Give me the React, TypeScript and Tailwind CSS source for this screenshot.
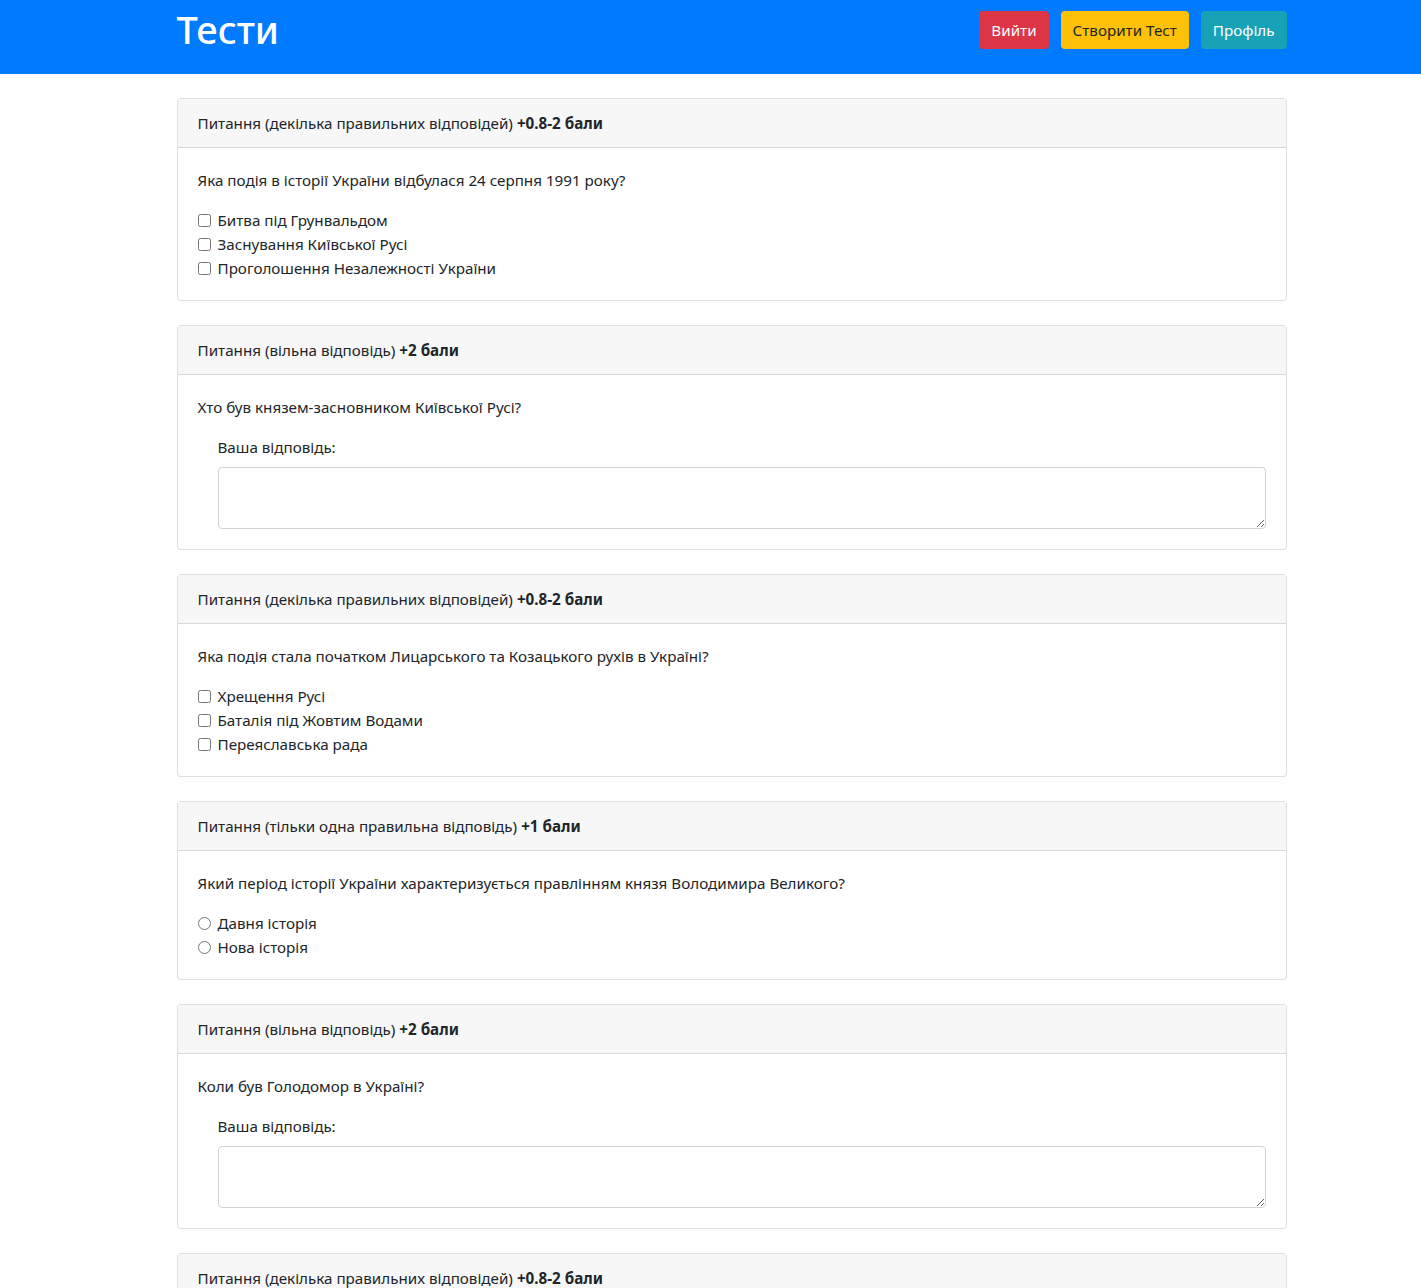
import React from "react";

type Q =
  | { kind: "multi"; header: string; points: string; text: string; options: string[] }
  | { kind: "single"; header: string; points: string; text: string; options: string[] }
  | { kind: "free"; header: string; points: string; text: string };

const questions: Q[] = [
  {
    kind: "multi",
    header: "Питання (декілька правильних відповідей)",
    points: "+0.8-2 бали",
    text: "Яка подія в історії України відбулася 24 серпня 1991 року?",
    options: ["Битва під Грунвальдом", "Заснування Київської Русі", "Проголошення Незалежності України"],
  },
  {
    kind: "free",
    header: "Питання (вільна відповідь)",
    points: "+2 бали",
    text: "Хто був князем-засновником Київської Русі?",
  },
  {
    kind: "multi",
    header: "Питання (декілька правильних відповідей)",
    points: "+0.8-2 бали",
    text: "Яка подія стала початком Лицарського та Козацького рухів в Україні?",
    options: ["Хрещення Русі", "Баталія під Жовтим Водами", "Переяславська рада"],
  },
  {
    kind: "single",
    header: "Питання (тільки одна правильна відповідь)",
    points: "+1 бали",
    text: "Який період історії України характеризується правлінням князя Володимира Великого?",
    options: ["Давня історія", "Нова історія"],
  },
  {
    kind: "free",
    header: "Питання (вільна відповідь)",
    points: "+2 бали",
    text: "Коли був Голодомор в Україні?",
  },
  {
    kind: "multi",
    header: "Питання (декілька правильних відповідей)",
    points: "+0.8-2 бали",
    text: "Яка подія в історії України відбулася 24 серпня 1991 року?",
    options: ["Битва під Грунвальдом", "Заснування Київської Русі", "Проголошення Незалежності України"],
  },
];

function Card({ q, idx }: { q: Q; idx: number }) {
  return (
    <div className="mb-6 rounded-[4px] border border-[rgba(0,0,0,0.125)] bg-white">
      <div className="border-b border-[rgba(0,0,0,0.125)] bg-[#f7f7f7] px-5 py-3 leading-6">
        {q.header} <b className="font-bold">{q.points}</b>
      </div>
      <div className="p-5">
        <p className="mb-4 leading-6">{q.text}</p>
        {q.kind === "free" ? (
          <div className="ml-5">
            <label className="mb-2 block leading-6">Ваша відповідь:</label>
            <textarea
              rows={2}
              className="block h-[62px] w-full resize-y rounded-[4px] border border-[#ced4da] bg-white px-3 py-1.5 leading-6 outline-none"
            />
          </div>
        ) : (
          <div>
            {q.options.map((o, i) => (
              <label key={i} className="flex h-6 items-center leading-6">
                <input
                  type={q.kind === "multi" ? "checkbox" : "radio"}
                  name={`q${idx}`}
                  className="m-0 mr-[7px] h-[13px] w-[13px]"
                />
                <span>{o}</span>
              </label>
            ))}
          </div>
        )}
      </div>
    </div>
  );
}

export default function App() {
  return (
    <div
      className="min-h-screen bg-white text-[15.2px] text-[#212529]"
      style={{ fontFamily: '"Noto Sans", "Open Sans", sans-serif' }}
    >
      <nav className="h-[74px] bg-[#007bff]">
        <div className="mx-auto flex h-full w-[1110px] translate-x-[21px] items-start justify-between">
          <h1 className="mt-[5px] text-[38px] font-medium leading-[48px] text-white">Тести</h1>
          <div className="mt-[11px] flex gap-3">
            <button className="h-[38px] rounded-[4px] bg-[#dc3545] px-3 text-white">Вийти</button>
            <button className="h-[38px] rounded-[4px] bg-[#ffc107] px-3 text-[#212529]">Створити Тест</button>
            <button className="h-[38px] rounded-[4px] bg-[#17a2b8] px-3 text-white">Профіль</button>
          </div>
        </div>
      </nav>
      <div className="mx-auto w-[1110px] translate-x-[21px] pt-6">
        {questions.map((q, i) => (
          <Card key={i} q={q} idx={i} />
        ))}
      </div>
    </div>
  );
}
